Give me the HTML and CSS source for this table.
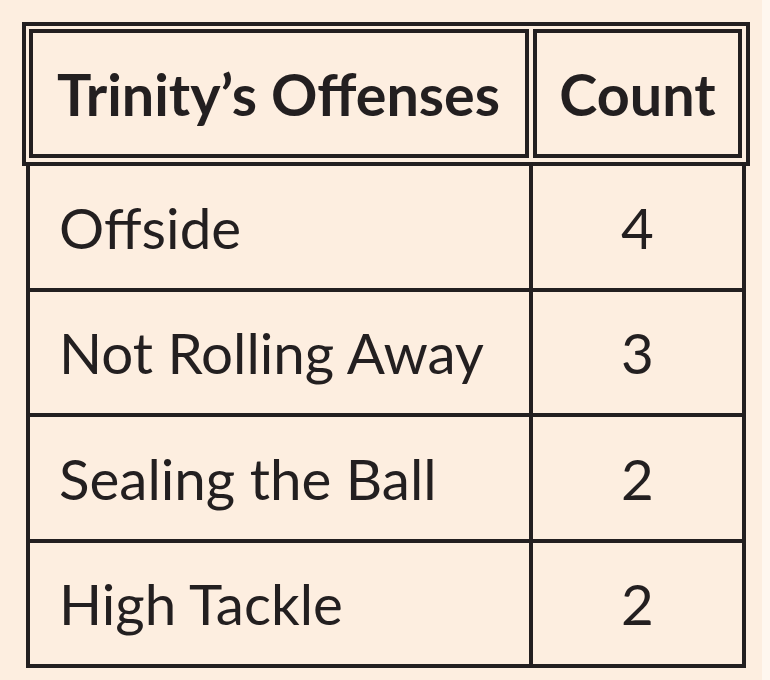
FILE: index.html
```html
<!DOCTYPE html>
<html>
<head>
<meta charset="utf-8">
<link rel="stylesheet" href="styles.css">
</head>
<body>
<div class="sheet">
  <div class="head">
    <div class="hcell name">Trinity’s Offenses</div>
    <div class="hcell count">Count</div>
  </div>
  <div class="rows">
    <div class="row"><div class="cell name">Offside</div><div class="cell count">4</div></div>
    <div class="row"><div class="cell name">Not Rolling Away</div><div class="cell count">3</div></div>
    <div class="row"><div class="cell name">Sealing the Ball</div><div class="cell count">2</div></div>
    <div class="row"><div class="cell name">High Tackle</div><div class="cell count">2</div></div>
  </div>
</div>
</body>
</html>
```
FILE: styles.css
```css
html, body {
  margin: 0;
  padding: 0;
  background: #fff7ef;
}
.sheet {
  width: 762px;
  height: 680px;
  box-sizing: border-box;
  padding: 22px 0 0 22px;
  background: #fdeee0;
  font-family: "Lato", "Liberation Sans", sans-serif;
  color: #231f20;
}
.head {
  width: 728px;
  height: 144px;
  box-sizing: border-box;
  border: 4px solid #231f20;
  padding: 3px 4px 4px 3px;
  display: flex;
  gap: 4px;
}
.hcell {
  box-sizing: border-box;
  height: 129px;
  border: 4px solid #231f20;
  display: flex;
  align-items: center;
  font-weight: 700;
  font-size: 57.5px;
}
.hcell.name {
  width: 500px;
  padding-left: 24px;
}
.hcell.count {
  width: 209px;
  justify-content: center;
}
.rows {
  width: 720px;
  margin-left: 4px;
  box-sizing: border-box;
  border-left: 4px solid #231f20;
  border-right: 4px solid #231f20;
}
.row {
  display: flex;
  height: 125.5px;
  box-sizing: border-box;
  border-bottom: 4px solid #231f20;
}
.cell {
  display: flex;
  align-items: center;
  font-size: 56.5px;
}
.cell.name {
  width: 503px;
  box-sizing: border-box;
  border-right: 4px solid #231f20;
  padding-left: 29px;
}
.cell.count {
  width: 209px;
  justify-content: center;
}
```
